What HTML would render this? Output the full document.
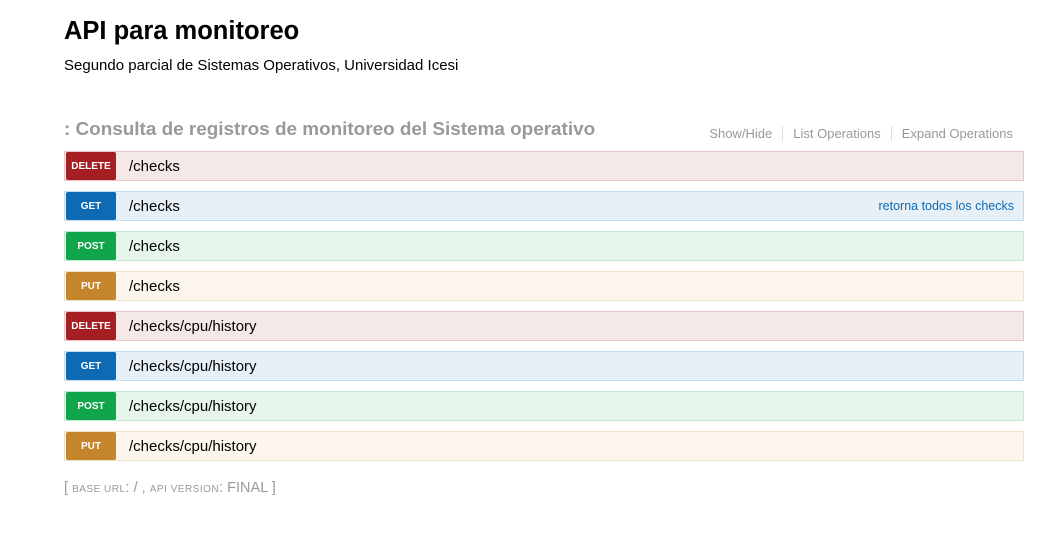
<!DOCTYPE html>
<html><head><meta charset="utf-8"><style>
body{margin:0;background:#fff;font-family:"Liberation Sans",sans-serif;width:1062px;height:533px;overflow:hidden}
h1{position:absolute;left:64px;top:17px;margin:0;font-size:25.5px;font-weight:bold;color:#000}
.sub{position:absolute;left:64px;top:57px;font-size:15px;color:#000}
.sec{position:absolute;left:64px;top:119px;font-size:18.9px;font-weight:bold;color:#999}
.links{position:absolute;right:49px;top:126px;font-size:13px;color:#999}
.links span{padding:0 10px;border-right:1px solid #ddd}
.links span:last-child{border:none;padding-right:0}
.row{position:absolute;left:64px;width:958px;height:28px;border:1px solid}
.b{position:absolute;left:1px;top:0px;width:50px;height:28px;color:#fff;font-size:10px;font-weight:bold;line-height:30px;text-align:center;border-radius:2px}
.p{position:absolute;left:64px;top:1px;line-height:28px;font-size:15px;color:#000}
.d{background:#f5e8e8;border-color:#e8c6c7}.d .b{background:#a41e22}
.g{background:#e7f0f7;border-color:#c3d9ec}.g .b{background:#0f6ab4}
.po{background:#e7f6ec;border-color:#c3e8d1}.po .b{background:#10a54a}
.pu{background:#fcf6ed;border-color:#f0e0ca}.pu .b{background:#c5862b}
.r{position:absolute;right:9px;top:0;line-height:28px;font-size:12.5px;color:#0f6ab4}
.foot{position:absolute;left:64px;top:480px;font-size:14.5px;color:#999}
.sc{font-size:10px;letter-spacing:.5px}
</style></head><body>
<h1>API para monitoreo</h1>
<div class="sub">Segundo parcial de Sistemas Operativos, Universidad Icesi</div>
<div class="sec">: Consulta de registros de monitoreo del Sistema operativo</div>
<div class="links"><span>Show/Hide</span><span>List Operations</span><span>Expand Operations</span></div>
<div class="row d" style="top:151px"><div class="b">DELETE</div><div class="p">/checks</div></div>
<div class="row g" style="top:191px"><div class="b">GET</div><div class="p">/checks</div><div class="r">retorna todos los checks</div></div>
<div class="row po" style="top:231px"><div class="b">POST</div><div class="p">/checks</div></div>
<div class="row pu" style="top:271px"><div class="b">PUT</div><div class="p">/checks</div></div>
<div class="row d" style="top:311px"><div class="b">DELETE</div><div class="p">/checks/cpu/history</div></div>
<div class="row g" style="top:351px"><div class="b">GET</div><div class="p">/checks/cpu/history</div></div>
<div class="row po" style="top:391px"><div class="b">POST</div><div class="p">/checks/cpu/history</div></div>
<div class="row pu" style="top:431px"><div class="b">PUT</div><div class="p">/checks/cpu/history</div></div>
<div class="foot">[ <span class="sc">BASE URL</span>: / , <span class="sc">API VERSION</span>: FINAL ]</div>
</body></html>
